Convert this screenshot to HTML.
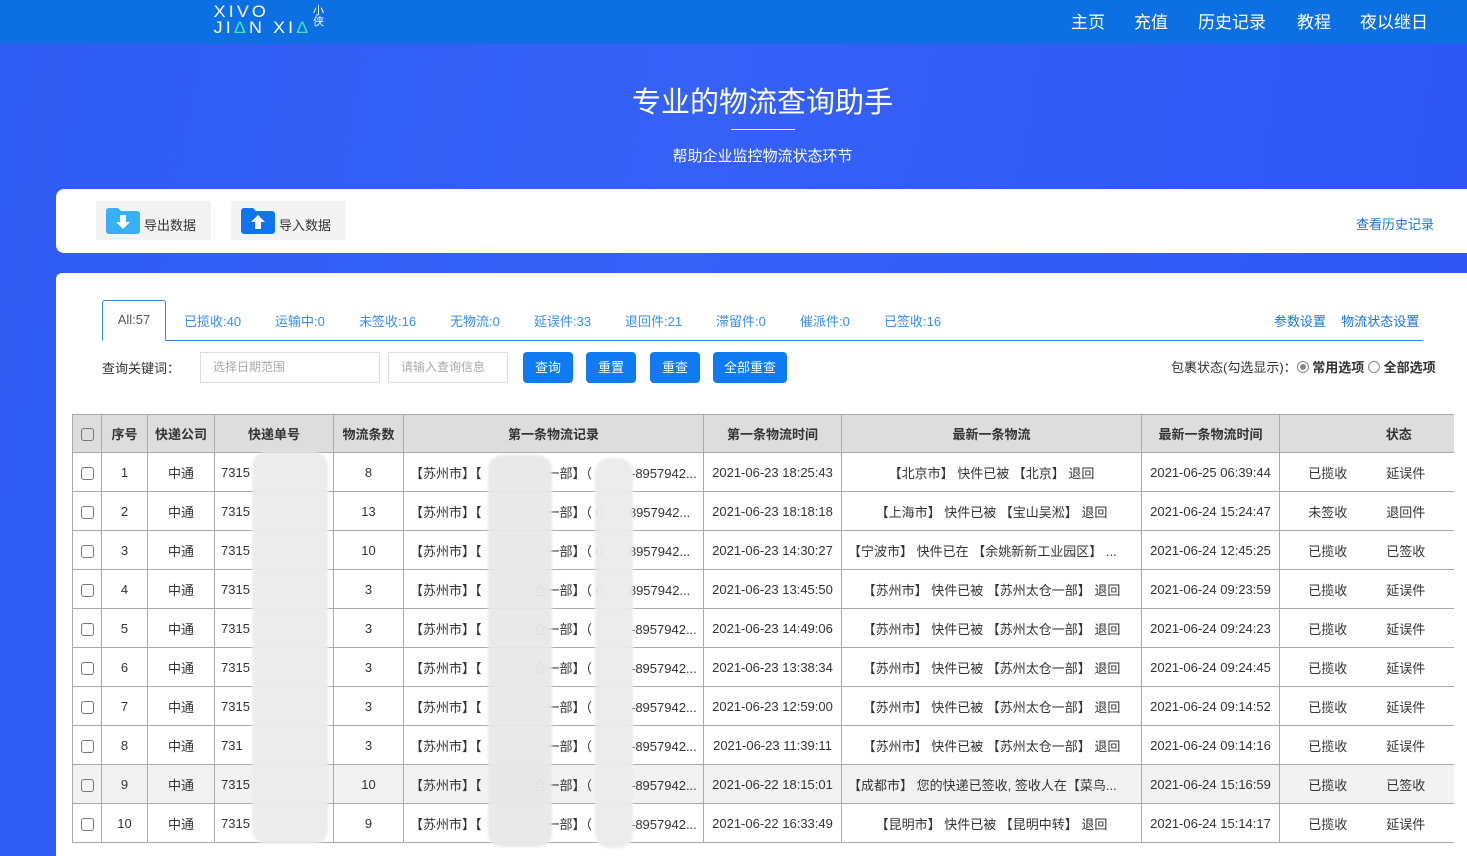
<!DOCTYPE html>
<html style="overflow:hidden;width:1467px;height:856px"><head><meta charset="utf-8"><style>
*{margin:0;padding:0;box-sizing:border-box}
body{width:1467px;height:856px;overflow:hidden;font-family:"Liberation Sans","Noto Sans CJK SC",sans-serif;background:linear-gradient(100deg,#2f5cf2 0%,#3561f7 45%,#2e55f5 100%);position:relative;color:#333}
.abs{position:absolute}
.hdr{left:0;top:0;width:1467px;height:44px;background:#0c70e3}
.nav{top:8px;font-size:17px;color:#fff}
.logo{left:216px;top:4px;color:#fff;font-size:17px;letter-spacing:3px;line-height:16px;transform:scaleX(1.05)}
.card{background:#fff;border-radius:8px}
.btn2{background:#f3f3f3;height:39px;top:201px;font-size:13px;color:#333}
.tab{top:311px;font-size:13px;color:#3a8ee6}
.b{top:352px;height:31px;background:#0f7bf2;color:#fff;font-size:13px;border-radius:4px;text-align:center;line-height:31px}
.inp{top:352px;height:31px;border:1px solid #ddd;font-size:12px;color:#aaa;padding-left:12px;line-height:29px}
table{position:absolute;left:72px;top:414px;width:1381px;border-collapse:collapse;font-size:13px;table-layout:fixed}
td,th{border:1px solid #aaa;height:39px;text-align:center;white-space:nowrap;overflow:hidden;padding:0 6px}
th{background:#ddd;font-weight:bold;color:#333;height:38px}
tr td:last-child,tr th:last-child{border-right:none}
.cb{display:inline-block;width:13px;height:13px;border:1px solid #777;border-radius:3px;vertical-align:middle}
.l{text-align:left}
.blur{background:#e6e6e6;border-radius:14px;filter:blur(1px);opacity:.95}
</style></head><body>
<div class="abs hdr"></div>
<div class="abs logo">XIVO<br>JI<span style="color:#3de3b0">Δ</span>N XI<span style="color:#3de3b0">Δ</span></div>
<div class="abs" style="left:313px;top:6px;color:#fff;font-size:11px;line-height:11px;width:12px">小<br>侠</div>
<div class="abs nav" style="left:1071px">主页</div>
<div class="abs nav" style="left:1134px">充值</div>
<div class="abs nav" style="left:1198px">历史记录</div>
<div class="abs nav" style="left:1297px">教程</div>
<div class="abs nav" style="left:1360px">夜以继日</div>
<div class="abs" style="left:0;width:1525px;top:79px;text-align:center;color:#fff;font-size:29px">专业的物流查询助手</div>
<div class="abs" style="left:731px;top:129px;width:64px;height:1px;background:#fff"></div>
<div class="abs" style="left:0;width:1525px;top:145px;text-align:center;color:#fff;font-size:15px">帮助企业监控物流状态环节</div>

<div class="abs card" style="left:56px;top:189px;width:1430px;height:64px"></div>
<div class="abs btn2" style="left:96px;width:115px"><svg class="abs" style="left:10px;top:7px" width="34" height="26"><path d="M0 3a3 3 0 0 1 3-3h9l3 3h16a3 3 0 0 1 3 3v17a3 3 0 0 1-3 3H3a3 3 0 0 1-3-3z" fill="#38b0f5"/><path d="M14 7h6v7h4l-7 7-7-7h4z" fill="#fff"/></svg><span class="abs" style="left:48px;top:14px">导出数据</span></div>
<div class="abs btn2" style="left:231px;width:115px"><svg class="abs" style="left:10px;top:7px" width="34" height="26"><path d="M0 3a3 3 0 0 1 3-3h9l3 3h16a3 3 0 0 1 3 3v17a3 3 0 0 1-3 3H3a3 3 0 0 1-3-3z" fill="#0f74ee"/><path d="M14 21h6v-7h4l-7-7-7 7h4z" fill="#fff"/></svg><span class="abs" style="left:48px;top:14px">导入数据</span></div>
<div class="abs" style="left:1356px;top:214px;font-size:13px;color:#1a73d9">查看历史记录</div>

<div class="abs card" style="left:56px;top:273px;width:1430px;height:583px;border-radius:6px 6px 0 0"></div>
<div class="abs" style="left:102px;top:340px;width:1321px;height:1px;background:#2e86de"></div>
<div class="abs" style="left:102px;top:300px;width:64px;height:41px;border:1px solid #2e86de;border-bottom:1px solid #fff;border-radius:3px 3px 0 0;background:#fff;font-size:13px;color:#555;text-align:center;line-height:38px">All:57</div>
<div class="abs tab" style="left:184px">已揽收:40</div>
<div class="abs tab" style="left:275px">运输中:0</div>
<div class="abs tab" style="left:359px">未签收:16</div>
<div class="abs tab" style="left:450px">无物流:0</div>
<div class="abs tab" style="left:534px">延误件:33</div>
<div class="abs tab" style="left:625px">退回件:21</div>
<div class="abs tab" style="left:716px">滞留件:0</div>
<div class="abs tab" style="left:800px">催派件:0</div>
<div class="abs tab" style="left:884px">已签收:16</div>
<div class="abs" style="left:1274px;top:311px;font-size:13px;color:#1a73d9;word-spacing:4px">参数设置 &nbsp;物流状态设置</div>
<div class="abs" style="left:102px;top:358px;font-size:13px;color:#333">查询关键词：</div>
<div class="abs inp" style="left:200px;width:180px">选择日期范围</div>
<div class="abs inp" style="left:388px;width:120px">请输入查询信息</div>
<div class="abs b" style="left:523px;width:50px">查询</div>
<div class="abs b" style="left:586px;width:50px">重置</div>
<div class="abs b" style="left:650px;width:50px">重查</div>
<div class="abs b" style="left:713px;width:74px">全部重查</div>
<div class="abs" style="left:1171px;top:357px;font-size:13px;color:#333">包裹状态(勾选显示)：<span style="display:inline-block;width:12px;height:12px;border:1px solid #888;border-radius:50%;vertical-align:-1px;position:relative"><span style="position:absolute;left:2px;top:2px;width:6px;height:6px;border-radius:50%;background:#888"></span></span> <b>常用选项</b> <span style="display:inline-block;width:12px;height:12px;border:1px solid #888;border-radius:50%;vertical-align:-1px"></span> <b>全部选项</b></div>

<table>
<colgroup><col style="width:29px"><col style="width:46px"><col style="width:67px"><col style="width:119px"><col style="width:70px"><col style="width:300px"><col style="width:138px"><col style="width:300px"><col style="width:138px"><col style="width:174px"></colgroup>
<tr><th><span class="cb"></span></th><th>序号</th><th>快递公司</th><th>快递单号</th><th>物流条数</th><th>第一条物流记录</th><th>第一条物流时间</th><th>最新一条物流</th><th>最新一条物流时间</th><th style="padding-left:70px">状态</th></tr>
<tr><td><span class="cb"></span></td><td>1</td><td>中通</td><td class="l">7315</td><td>8</td><td class="l">【苏州市】【　　　　　一部】（　　　-8957942...</td><td>2021-06-23 18:25:43</td><td>【北京市】 快件已被 【北京】 退回</td><td>2021-06-25 06:39:44</td><td>已揽收　　　延误件</td></tr>
<tr><td><span class="cb"></span></td><td>2</td><td>中通</td><td class="l">7315</td><td>13</td><td class="l">【苏州市】【　　　　　一部】（ 0　　8957942...</td><td>2021-06-23 18:18:18</td><td>【上海市】 快件已被 【宝山吴淞】 退回</td><td>2021-06-24 15:24:47</td><td>未签收　　　退回件</td></tr>
<tr><td><span class="cb"></span></td><td>3</td><td>中通</td><td class="l">7315</td><td>10</td><td class="l">【苏州市】【　　　　　一部】（ 0　　8957942...</td><td>2021-06-23 14:30:27</td><td class="l">【宁波市】 快件已在 【余姚新新工业园区】 ...</td><td>2021-06-24 12:45:25</td><td>已揽收　　　已签收</td></tr>
<tr><td><span class="cb"></span></td><td>4</td><td>中通</td><td class="l">7315</td><td>3</td><td class="l">【苏州市】【　　　　仓一部】（ 0　　8957942...</td><td>2021-06-23 13:45:50</td><td>【苏州市】 快件已被 【苏州太仓一部】 退回</td><td>2021-06-24 09:23:59</td><td>已揽收　　　延误件</td></tr>
<tr><td><span class="cb"></span></td><td>5</td><td>中通</td><td class="l">7315</td><td>3</td><td class="l">【苏州市】【　　　　仓一部】（　　　-8957942...</td><td>2021-06-23 14:49:06</td><td>【苏州市】 快件已被 【苏州太仓一部】 退回</td><td>2021-06-24 09:24:23</td><td>已揽收　　　延误件</td></tr>
<tr><td><span class="cb"></span></td><td>6</td><td>中通</td><td class="l">7315</td><td>3</td><td class="l">【苏州市】【　　　　仓一部】（　　　-8957942...</td><td>2021-06-23 13:38:34</td><td>【苏州市】 快件已被 【苏州太仓一部】 退回</td><td>2021-06-24 09:24:45</td><td>已揽收　　　延误件</td></tr>
<tr><td><span class="cb"></span></td><td>7</td><td>中通</td><td class="l">7315</td><td>3</td><td class="l">【苏州市】【　　　　　一部】（　　　-8957942...</td><td>2021-06-23 12:59:00</td><td>【苏州市】 快件已被 【苏州太仓一部】 退回</td><td>2021-06-24 09:14:52</td><td>已揽收　　　延误件</td></tr>
<tr><td><span class="cb"></span></td><td>8</td><td>中通</td><td class="l">731</td><td>3</td><td class="l">【苏州市】【　　　　　一部】（　　　-8957942...</td><td>2021-06-23 11:39:11</td><td>【苏州市】 快件已被 【苏州太仓一部】 退回</td><td>2021-06-24 09:14:16</td><td>已揽收　　　延误件</td></tr>
<tr style="background:#f2f2f2"><td><span class="cb"></span></td><td>9</td><td>中通</td><td class="l">7315</td><td>10</td><td class="l">【苏州市】【　　　　仓一部】（　　　-8957942...</td><td>2021-06-22 18:15:01</td><td class="l">【成都市】 您的快递已签收, 签收人在【菜鸟...</td><td>2021-06-24 15:16:59</td><td>已揽收　　　已签收</td></tr>
<tr><td><span class="cb"></span></td><td>10</td><td>中通</td><td class="l">7315</td><td>9</td><td class="l">【苏州市】【　　　　　一部】（　　　-8957942...</td><td>2021-06-22 16:33:49</td><td>【昆明市】 快件已被 【昆明中转】 退回</td><td>2021-06-24 15:14:17</td><td>已揽收　　　延误件</td></tr>
</table>
<div class="abs blur" style="left:252px;top:452px;width:76px;height:392px;background:#ececec"></div>
<div class="abs blur" style="left:488px;top:455px;width:64px;height:392px;background:#e8e8e8"></div>
<div class="abs blur" style="left:595px;top:458px;width:38px;height:390px;background:#ececec"></div>
</body></html>
